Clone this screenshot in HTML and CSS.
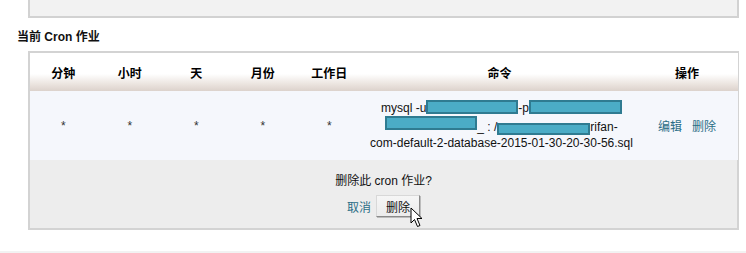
FILE: index.html
```html
<!DOCTYPE html>
<html lang="zh-CN">
<head>
<meta charset="utf-8">
<title>当前 Cron 作业</title>
<link rel="stylesheet" href="styles.css">
</head>
<body>
<div class="top-panel"></div>
<h2 class="heading">当前 Cron 作业</h2>
<div class="cron-box">
  <table class="cron-table">
    <colgroup>
      <col class="c-min"><col class="c-hour"><col class="c-day"><col class="c-mon"><col class="c-wd"><col class="c-cmd"><col class="c-act">
    </colgroup>
    <thead>
      <tr>
        <th>分钟</th><th>小时</th><th>天</th><th>月份</th><th>工作日</th><th>命令</th><th>操作</th>
      </tr>
    </thead>
    <tbody>
      <tr>
        <td class="star">*</td>
        <td class="star">*</td>
        <td class="star">*</td>
        <td class="star">*</td>
        <td class="star">*</td>
        <td class="cmd">mysql -u<span class="redact r1"></span>-p<span class="redact r2"></span><br><span class="redact r3"></span>_ : /<span class="redact r4"></span>rifan-<br>com-default-2-database-2015-01-30-20-30-56.sql</td>
        <td class="actions"><a href="#">编辑</a><a href="#">删除</a></td>
      </tr>
    </tbody>
  </table>
  <div class="confirm">
    <p class="question">删除此 cron 作业?</p>
    <div class="confirm-row">
      <a href="#" class="cancel">取消</a>
      <span class="btn-wrap">
        <button class="btn">删除</button>
        <svg class="cursor" width="14" height="21" viewBox="0 0 14 21"><path d="M1 1 L1 16 L4.5 12.5 L7.5 19.5 L10 18.5 L7 11.5 L12 11.5 Z" fill="#fff" stroke="#000" stroke-width="1" stroke-linejoin="miter"/></svg>
      </span>
    </div>
  </div>
</div>
<div class="bottom-strip"></div>
</body>
</html>
```
FILE: styles.css
```css
html, body {
  margin: 0;
  padding: 0;
  background: #fff;
}
body {
  font-family: "Liberation Sans", "Noto Sans CJK SC", sans-serif;
  font-size: 12px;
  color: #111;
}
.top-panel {
  margin-left: 28px;
  width: 707px;
  height: 16px;
  box-sizing: content-box;
  background: #f2f2f2;
  border: 2px solid #d2d2d2;
  border-top: 0;
}
.heading {
  margin: 10px 0 5px 17px;
  font-size: 12px;
  line-height: 18px;
  font-weight: bold;
  color: #111;
}
.cron-box {
  margin-left: 28px;
  width: 711px;
  box-sizing: border-box;
  border: 2px solid #d3d3d3;
}
.cron-table {
  width: 100%;
  border-collapse: collapse;
  table-layout: fixed;
}
.c-min, .c-hour, .c-day, .c-mon, .c-wd { width: 66.5px; }
.c-cmd { width: 274px; }
.c-act { width: 101px; }
.cron-table th {
  height: 38px;
  padding: 0;
  font-weight: bold;
  font-size: 12px;
  color: #000;
  text-align: center;
  background: linear-gradient(#ffffff 0%, #ffffff 55%, #ebe4df 82%, #dcd2cc 100%);
}
.cron-table td {
  height: 69px;
  padding: 0;
  background: #f5f7fc;
  text-align: center;
  vertical-align: middle;
}
.star {
  color: #333;
  line-height: 16px;
  padding-top: 1px;
}
.cmd {
  line-height: 16px;
  color: #111;
}
.cmd.cmd { padding-left: 4px; }
.redact {
  display: inline-block;
  height: 10px;
  background: #4bacc6;
  border: 2px solid #2f7b91;
  vertical-align: -2px;
}
.r1 { width: 88px; }
.r2 { width: 89px; }
.r3 { width: 88px; vertical-align: 1px; }
.r4 { width: 89px; height: 8px; vertical-align: -4px; }
.actions a {
  color: #2b6e86;
  text-decoration: none;
  margin: 0 5px;
}
.confirm {
  background: #ededed;
  height: 68px;
  box-sizing: border-box;
  padding-top: 13px;
  text-align: center;
}
.question {
  margin: 0;
  line-height: 16px;
  color: #111;
}
.confirm-row {
  margin-top: 6px;
  display: flex;
  justify-content: center;
  align-items: center;
  gap: 5px;
}
.cancel {
  color: #2b6e86;
  text-decoration: none;
}
.btn-wrap {
  position: relative;
  display: inline-block;
}
.btn {
  display: block;
  width: 44px;
  height: 22px;
  padding: 0;
  font-family: "Liberation Sans", "Noto Sans CJK SC", sans-serif;
  font-size: 12px;
  color: #111;
  background: linear-gradient(#f6f6f6, #ececec);
  border: 1px solid;
  border-color: #d8d8d8 #8a8a8a #8a8a8a #d8d8d8;
  box-shadow: 1px 1px 0 #bcbcbc;
}
.cursor {
  position: absolute;
  left: 34px;
  top: 12px;
}
.bottom-strip {
  margin-top: 21px;
  height: 4px;
  background: #f2f2f2;
}
```
